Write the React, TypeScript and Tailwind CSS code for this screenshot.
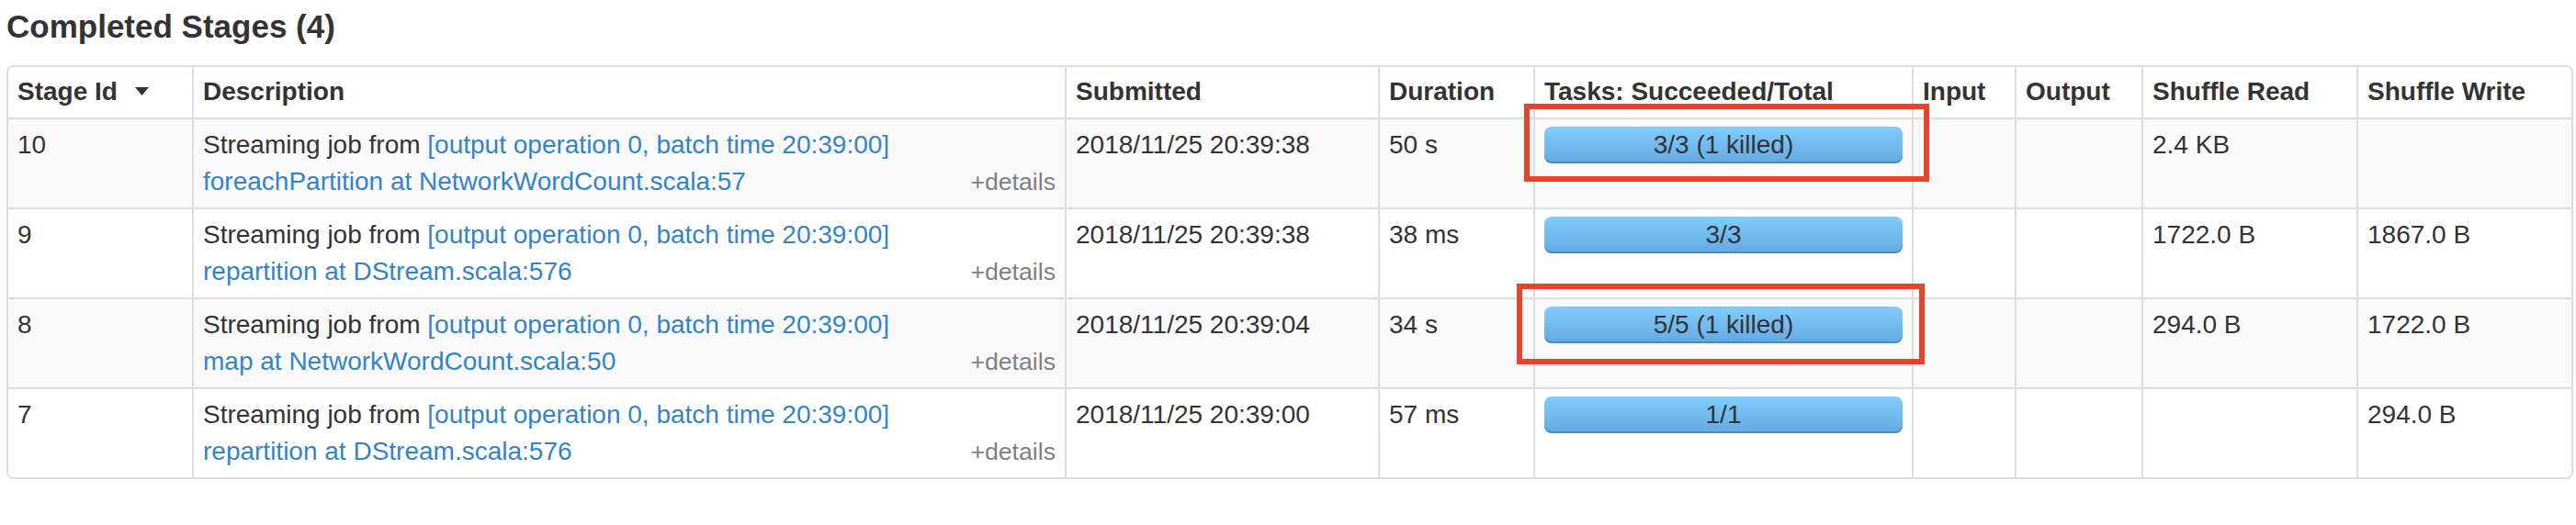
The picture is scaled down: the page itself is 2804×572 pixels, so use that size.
const stages = [
  {
    id: '10',
    name: 'foreachPartition at NetworkWordCount.scala:57',
    submitted: '2018/11/25 20:39:38',
    duration: '50 s',
    tasks: '3/3 (1 killed)',
    read: '2.4 KB',
    write: '',
  },
  {
    id: '9',
    name: 'repartition at DStream.scala:576',
    submitted: '2018/11/25 20:39:38',
    duration: '38 ms',
    tasks: '3/3',
    read: '1722.0 B',
    write: '1867.0 B',
  },
  {
    id: '8',
    name: 'map at NetworkWordCount.scala:50',
    submitted: '2018/11/25 20:39:04',
    duration: '34 s',
    tasks: '5/5 (1 killed)',
    read: '294.0 B',
    write: '1722.0 B',
  },
  {
    id: '7',
    name: 'repartition at DStream.scala:576',
    submitted: '2018/11/25 20:39:00',
    duration: '57 ms',
    tasks: '1/1',
    read: '',
    write: '294.0 B',
  },
];

const cols =
  'grid grid-cols-[200px_950px_341px_169px_412px_112px_138px_234px_234px]';
const th = 'px-[10px] pt-[7px] pb-[8px] border-l-2 border-[#dddddd]';
const td = 'px-[10px] py-[8px] border-l-2 border-[#dddddd]';

export default function App() {
  return (
    <div className="relative w-[2804px] h-[572px] overflow-hidden bg-white pl-[7px] font-['Liberation_Sans',Arial,sans-serif] text-[28px] leading-[40px] text-[#333333]">
      <h4 className="pt-[9px] mb-[22px] text-[35px] leading-[40px] font-bold">
        Completed Stages (4)
      </h4>

      <div className="w-[2794px] overflow-hidden rounded-[8px] border-2 border-[#dddddd]">
        {/* header */}
        <div className={`${cols} font-bold`}>
          <div className="px-[10px] pt-[7px] pb-[8px]">
            Stage Id
            <svg
              width="15"
              height="9"
              viewBox="0 0 15 9"
              className="ml-[19px] mb-[5px] inline-block"
            >
              <path d="M0 0 H15 L7.5 9 Z" fill="#333333" />
            </svg>
          </div>
          <div className={th}>Description</div>
          <div className={th}>Submitted</div>
          <div className={th}>Duration</div>
          <div className={th}>Tasks: Succeeded/Total</div>
          <div className={th}>Input</div>
          <div className={th}>Output</div>
          <div className={th}>Shuffle Read</div>
          <div className={th}>Shuffle Write</div>
        </div>

        {stages.map((s, i) => (
          <div
            key={s.id}
            className={`${cols} border-t-2 border-[#dddddd] ${
              i % 2 === 0 ? 'bg-[#f9f9f9]' : 'bg-white'
            }`}
          >
            <div className="px-[10px] py-[8px]">{s.id}</div>
            <div className={td}>
              <div>
                Streaming job from{' '}
                <a className="text-[#3483c9]">
                  [output operation 0, batch time 20:39:00]
                </a>
              </div>
              <div className="flex items-baseline justify-between">
                <a className="text-[#3483c9]">{s.name}</a>
                <span className="text-[26.67px] text-[#808080]">+details</span>
              </div>
            </div>
            <div className={td}>{s.submitted}</div>
            <div className={td}>{s.duration}</div>
            <div className={td}>
              <div className="h-[40px] rounded-[8px] bg-gradient-to-b from-[#80cdfb] to-[#63a9e2] text-center shadow-[inset_0_-2px_0_rgba(40,90,150,0.4)]">
                {s.tasks}
              </div>
            </div>
            <div className={td}></div>
            <div className={td}></div>
            <div className={td}>{s.read}</div>
            <div className={td}>{s.write}</div>
          </div>
        ))}
      </div>

      {/* annotation boxes */}
      <div className="absolute left-[1659px] top-[113px] h-[85px] w-[441px] border-[6px] border-[#e9432b]" />
      <div className="absolute left-[1651px] top-[309px] h-[88px] w-[444px] border-[6px] border-[#e9432b]" />
    </div>
  );
}
